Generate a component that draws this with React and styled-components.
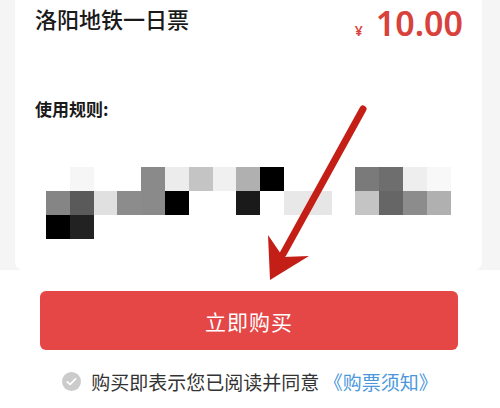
import React from 'react';
import styled, { createGlobalStyle } from 'styled-components';

const GlobalStyle = createGlobalStyle`
  body {
    margin: 0;
    background: #fff;
    font-family: "Noto Sans", "Noto Sans CJK SC", sans-serif;
  }
`;

const Page = styled.div`
  position: relative;
  width: 500px;
  height: 408px;
  overflow: hidden;
  background: #fff;
`;

const TopArea = styled.div`
  background: #f5f5f5;
  padding: 0 18px 0 15px;
`;

const Card = styled.div`
  background: #fff;
  height: 270px;
  padding: 0 19px 0 20px;
  border-radius: 0 0 8px 8px;
  box-sizing: border-box;
`;

const Header = styled.div`
  display: flex;
  justify-content: space-between;
  align-items: flex-start;
`;

const Title = styled.div`
  margin-top: 7px;
  font-family: "Noto Sans CJK SC", sans-serif;
  font-size: 22px;
  line-height: 22px;
  font-weight: 500;
  color: #1a1a1a;
`;

const Price = styled.div`
  margin-top: 6px;
  display: flex;
  align-items: baseline;
  gap: 13px;
  color: #d8413c;
`;

const Currency = styled.span`
  font-size: 14px;
  font-weight: 600;
`;

const Amount = styled.span`
  font-size: 34px;
  line-height: 34px;
  font-weight: 600;
`;

const RulesLabel = styled.div`
  margin-top: 60px;
  font-family: "Noto Sans CJK SC", sans-serif;
  font-size: 17px;
  line-height: 17px;
  font-weight: 700;
  color: #1a1a1a;
`;

const Mosaic = styled.div`
  margin: 50px 0 0 11px;
  display: grid;
  grid-template-columns: repeat(17, 23.8px);
  grid-auto-rows: 24px;
`;

const Cell = styled.div`
  background: ${(p) => p.$c || 'transparent'};
`;

const Bottom = styled.div`
  display: flex;
  flex-direction: column;
  align-items: center;
`;

const BuyButton = styled.button`
  margin-top: 21px;
  width: 418px;
  height: 59px;
  border: none;
  border-radius: 6px;
  background: #e54646;
  color: #fff;
  font-family: "Noto Sans CJK SC", sans-serif;
  font-size: 21px;
  letter-spacing: 1px;
  margin-left: -2px;
`;

const Agreement = styled.div`
  margin-top: 21px;
  display: flex;
  align-items: center;
  gap: 10px;
  font-family: "Noto Sans CJK SC", sans-serif;
  font-size: 19px;
  line-height: 21px;
  color: #333;
`;

const Link = styled.span`
  color: #4b97dc;
`;

const Overlay = styled.svg`
  position: absolute;
  left: 0;
  top: 0;
  pointer-events: none;
`;

const rows = [
  { 1: '#f6f6f6', 4: '#8a8a8a', 5: '#ececec', 6: '#c4c4c4', 7: '#f0f0f0', 8: '#b0b0b0', 9: '#000', 13: '#7a7a7a', 14: '#6e6e6e', 15: '#eeeeee', 16: '#f8f8f8' },
  { 0: '#858585', 1: '#5a5a5a', 2: '#e0e0e0', 3: '#8c8c8c', 4: '#8a8a8a', 5: '#000', 8: '#1a1a1a', 10: '#e8e8e8', 11: '#e6e6e6', 13: '#c4c4c4', 14: '#666', 15: '#8c8c8c', 16: '#b0b0b0' },
  { 0: '#000', 1: '#222' },
];

const CheckIcon = () => (
  <svg width="19" height="19" viewBox="0 0 20 20">
    <circle cx="10" cy="10" r="10" fill="#cbcbcb" />
    <path d="M5.5 10.3l3 2.8 5.8-5.8" fill="none" stroke="#fff" strokeWidth="1.8" strokeLinecap="round" strokeLinejoin="round" />
  </svg>
);

const App = () => {
  return (
    <Page>
      <GlobalStyle />
      <TopArea>
        <Card>
          <Header>
            <Title>洛阳地铁一日票</Title>
            <Price>
              <Currency>¥</Currency>
              <Amount>10.00</Amount>
            </Price>
          </Header>
          <RulesLabel>使用规则:</RulesLabel>
          <Mosaic>
            {rows.map((row, r) =>
              Array.from({ length: 17 }, (_, i) => <Cell key={`${r}-${i}`} $c={row[i]} />)
            )}
          </Mosaic>
        </Card>
      </TopArea>
      <Bottom>
        <BuyButton>立即购买</BuyButton>
        <Agreement>
          <CheckIcon />
          <span>
            购买即表示您已阅读并同意 <Link>《购票须知》</Link>
          </span>
        </Agreement>
      </Bottom>
      <Overlay width="500" height="408" viewBox="0 0 500 408">
        <line x1="363" y1="109" x2="283" y2="254" stroke="#c41f17" strokeWidth="7" strokeLinecap="round" />
        <polygon points="268,235 283,257 309,256 270,280" fill="#c41f17" />
      </Overlay>
    </Page>
  );
};

export default App;
